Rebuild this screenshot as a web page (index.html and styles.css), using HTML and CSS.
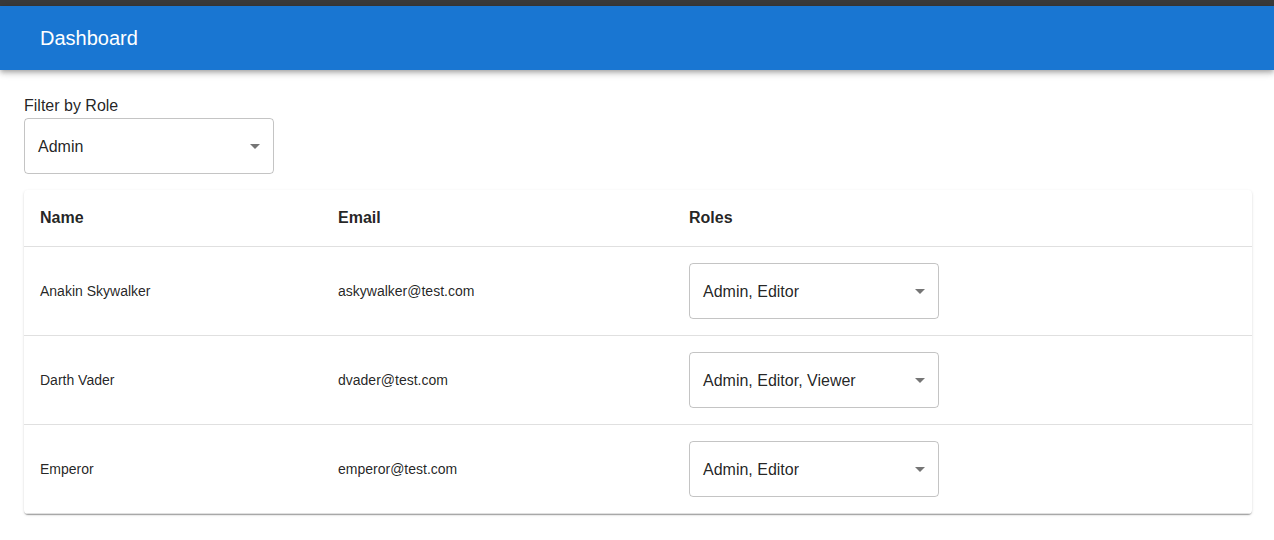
FILE: index.html
```html
<!DOCTYPE html>
<html lang="en">
<head>
<meta charset="utf-8">
<title>Dashboard</title>
<link rel="stylesheet" href="styles.css">
</head>
<body>
<div class="topstrip"></div>
<header class="appbar"><h1 class="title">Dashboard</h1></header>
<main class="content">
  <label class="filter-label">Filter by Role</label>
  <div class="select">
    <span class="select-value">Admin</span>
    <svg class="arrow" viewBox="0 0 24 24" width="24" height="24"><path d="M7 10l5 5 5-5z"/></svg>
  </div>
  <div class="card">
    <table class="table">
      <colgroup><col class="c-name"><col class="c-email"><col></colgroup>
      <thead>
        <tr><th>Name</th><th>Email</th><th>Roles</th></tr>
      </thead>
      <tbody>
        <tr><td>Anakin Skywalker</td><td>askywalker@test.com</td><td><div class="select"><span class="select-value">Admin, Editor</span><svg class="arrow" viewBox="0 0 24 24" width="24" height="24"><path d="M7 10l5 5 5-5z"/></svg></div></td></tr>
        <tr><td>Darth Vader</td><td>dvader@test.com</td><td><div class="select"><span class="select-value">Admin, Editor, Viewer</span><svg class="arrow" viewBox="0 0 24 24" width="24" height="24"><path d="M7 10l5 5 5-5z"/></svg></div></td></tr>
        <tr><td>Emperor</td><td>emperor@test.com</td><td><div class="select"><span class="select-value">Admin, Editor</span><svg class="arrow" viewBox="0 0 24 24" width="24" height="24"><path d="M7 10l5 5 5-5z"/></svg></div></td></tr>
      </tbody>
    </table>
  </div>
</main>
</body>
</html>
```
FILE: styles.css
```css
* { box-sizing: border-box; }
html, body { margin: 0; padding: 0; background: #fff; }
body {
  font-family: "Liberation Sans", Arial, sans-serif;
  color: rgba(0, 0, 0, 0.87);
}
.topstrip { height: 6px; background: #3a3a3a; }
.appbar {
  height: 64px;
  background: #1976d2;
  color: #fff;
  display: flex;
  align-items: center;
  padding-left: 40px;
  box-shadow: 0 2px 4px -1px rgba(0,0,0,0.2), 0 4px 5px 0 rgba(0,0,0,0.14), 0 1px 10px 0 rgba(0,0,0,0.12);
  position: relative;
}
.title { margin: 0; font-size: 20px; font-weight: 400; line-height: 1.6; }
.content { padding: 24px 22px 24px 24px; }
.filter-label { display: block; font-size: 16px; line-height: 24px; }
.select {
  width: 250px;
  height: 56px;
  border: 1px solid rgba(0,0,0,0.23);
  border-radius: 4px;
  display: flex;
  align-items: center;
  padding-left: 13px;
  position: relative;
  font-size: 16px;
  color: rgba(0,0,0,0.87);
}
.select-value { line-height: 23px; }
.arrow {
  position: absolute;
  right: 6px;
  top: 15px;
  fill: rgba(0,0,0,0.54);
}
.card {
  margin-top: 16px;
  background: #fff;
  border-radius: 4px;
  box-shadow: 0 2px 1px -1px rgba(0,0,0,0.2), 0 1px 1px 0 rgba(0,0,0,0.14), 0 1px 3px 0 rgba(0,0,0,0.12);
  overflow: hidden;
}
.table { width: 100%; border-collapse: collapse; table-layout: fixed; }
.c-name { width: 298px; }
.c-email { width: 351px; }
th, td {
  text-align: left;
  padding: 16px;
  border-bottom: 1px solid #e0e0e0;
  vertical-align: middle;
}
th { font-size: 16px; font-weight: 700; line-height: 24px; }
td { font-size: 14px; line-height: 20px; }
```
